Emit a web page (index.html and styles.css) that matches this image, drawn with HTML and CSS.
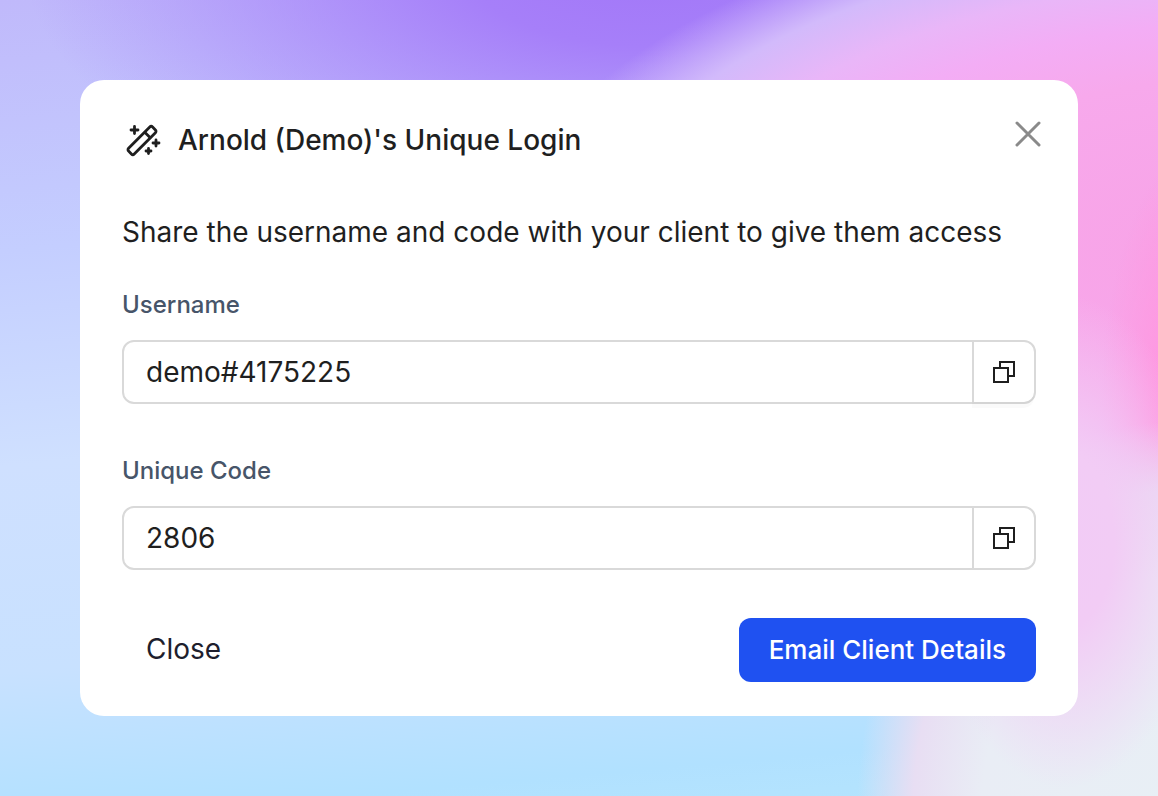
FILE: index.html
```html
<!DOCTYPE html>
<html lang="en">
<head>
    <meta charset="UTF-8">
    <meta name="viewport" content="width=device-width, initial-scale=1.0">
    <title>Unique Login</title>
    <link rel="stylesheet" href="styles.css">
</head>
<body>

    <main class="modal">
        <header class="modal-header">
            <svg class="wand" viewBox="0 0 36 36" aria-hidden="true">
                <rect x="-4" y="-17" width="8" height="34" rx="2" transform="translate(16 18.500) rotate(45)"/>
                <path d="M19 10.500l5 5M8.500 4.500v7M5 8h7M30 18v6M27 21h6M22.500 26.500v5M20 29h5"/>
            </svg>
            <h1>Arnold (Demo)'s Unique Login</h1>
            <button class="dismiss" type="button" aria-label="Dismiss">
                <svg viewBox="0 0 28 28"><path d="M3 3l22 22M25 3L3 25"/></svg>
            </button>
        </header>

        <p class="intro">Share the username and code with your client to give them access</p>

        <div class="fields">
            <div class="field">
                <label for="username">Username</label>
                <div class="input-group raised">
                    <input type="text" id="username" value="demo#4175225" readonly>
                    <button type="button" aria-label="Copy username">
                        <svg viewBox="0 0 24 24"><path d="M8 8V2h14v14h-6M2 8h14v14H2z"/></svg>
                    </button>
                </div>
            </div>

            <div class="field">
                <label for="code">Unique Code</label>
                <div class="input-group">
                    <input type="text" id="code" value="2806" readonly>
                    <button type="button" aria-label="Copy code">
                        <svg viewBox="0 0 24 24"><path d="M8 8V2h14v14h-6M2 8h14v14H2z"/></svg>
                    </button>
                </div>
            </div>
        </div>

        <footer class="actions">
            <button class="close" type="button">Close</button>
            <button class="email" type="button">Email Client Details</button>
        </footer>
    </main>

</body>
</html>
```
FILE: styles.css
```css
* {
    box-sizing: border-box;
}
body {
    margin: 0;
    padding: 80px;
    min-height: 100vh;
    font-family: Inter, sans-serif;
    color: #1f1f1f;
    background:
        radial-gradient(ellipse 12% 31% at 92% 68%, #f2cbf6 0%, #f2ccf5 35%, #f2ccf500 100%),
        radial-gradient(ellipse 27% 49% at 101% 102%, #e8eff5 0%, #e9edf5 60%, #e8def3 82%, #d6d8f900 100%),
        radial-gradient(ellipse 9% 34% at 104% 52%, #ff8fdd 0%, #ff97e0 40%, #fb9fe400 100%),
        radial-gradient(ellipse 61% 60% at 108% 45%, #f8a2e6 0%, #f7a9ec 52%, #f3adf5 68%, #e9b6f8 80%, #d2bafb 92%, #b6a0fa00 105%) top / 100% 70% no-repeat,
        radial-gradient(ellipse 54% 36% at 56% -5%, #a276f8 0%, #a67ff9 30%, #b9abfb00 100%),
        linear-gradient(175deg, #c0b9fb 0%, #c4ceff 28%, #cfe0ff 52%, #c8e1ff 75%, #b1e1ff 92%, #b5e5fd 100%);
}
button, input {
    font: inherit;
    color: inherit;
    background: none;
    border: 0;
    padding: 0;
}
svg {
    display: block;
    fill: none;
    stroke: currentColor;
}
.modal {
    padding: 40px 42px 34px;
    background: #fff;
    border-radius: 24px;
}
.modal-header {
    display: flex;
    align-items: center;
    gap: 16px;
    height: 40px;
}
.modal-header h1 {
    flex: 1;
    margin: 0;
    font-size: 28px;
    line-height: 40px;
    font-weight: 500;
}
.wand {
    width: 36px;
    height: 36px;
    margin-left: 4px;
    stroke-width: 2.8;
    stroke-linecap: round;
}
.dismiss {
    align-self: flex-start;
    margin-right: -6px;
    color: #8a8a8a;
}
.dismiss svg {
    width: 28px;
    height: 28px;
    stroke-width: 3;
    stroke-linecap: round;
}
.intro {
    margin: 52px 0 36px;
    font-size: 28px;
    line-height: 40px;
}
.fields {
    display: grid;
    gap: 50px;
    margin-bottom: 48px;
}
.field label {
    display: block;
    margin-bottom: 18px;
    font-size: 24px;
    line-height: 34px;
    font-weight: 500;
    color: #475569;
}
.input-group {
    display: flex;
    height: 64px;
    border: 2px solid #d9d9d9;
    border-radius: 12px;
}
.input-group input {
    flex: 1;
    min-width: 0;
    padding: 0 22px;
    font-size: 28px;
    outline: 0;
}
.input-group button {
    display: grid;
    place-items: center;
    width: 62px;
    border-left: 2px solid #d9d9d9;
    border-radius: 0 10px 10px 0;
}
.raised button {
    box-shadow: 0 6px 0 #00000005;
}
.input-group svg {
    width: 24px;
    height: 24px;
    stroke-width: 2;
}
.actions {
    display: flex;
    justify-content: space-between;
    height: 64px;
}
.actions button {
    padding-bottom: 2px;
}
.close {
    padding: 0 24px;
    font-size: 28px;
    color: #1e1e2d;
}
.email {
    padding: 0 30px;
    font-size: 26px;
    font-weight: 500;
    color: #fff;
    background: #1f51f1;
    border-radius: 12px;
}
```
